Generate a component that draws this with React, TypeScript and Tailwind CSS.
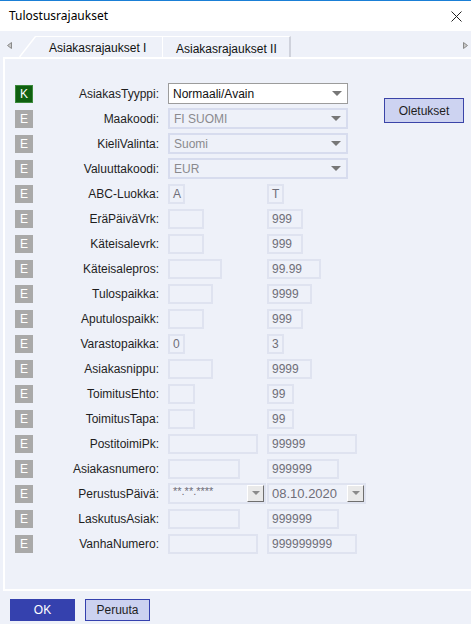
import { ReactNode } from 'react';

type Field = {
  label: string;
  tag?: 'K' | 'E';
  left?: ReactNode;
  right?: ReactNode;
};

function Select({ value, primary }: { value: string; primary?: boolean }) {
  return (
    <div
      className={
        primary
          ? 'w-[180px] h-[21px] shrink-0 flex items-center justify-between pl-[4px] pr-[5px] bg-white border border-[#9c9c9c] text-[#111]'
          : 'w-[180px] h-[21px] shrink-0 flex items-center justify-between pl-[4px] pr-[5px] border-2 border-[#d7dcee] text-[#8a8a8e]'
      }
    >
      <span className="leading-none">{value}</span>
      <svg width="10" height="6" viewBox="0 0 10 6">
        <path d="M0 0 L10 0 L5 5 Z" fill="#777" />
      </svg>
    </div>
  );
}

function Box({ w, value }: { w: string; value?: string }) {
  return (
    <div className={`${w} h-[20px] shrink-0 border-2 border-[#dfe3f0] flex items-center pl-[3px] text-[#6e6e78] leading-none`}>
      {value}
    </div>
  );
}

function DropButton() {
  return (
    <div className="w-[17px] h-[17px] bg-[#e9e9e9] border-t border-l border-t-white border-l-white border-b border-r border-b-[#6f6f6f] border-r-[#6f6f6f] flex items-center justify-center">
      <svg width="8" height="5" viewBox="0 0 8 5">
        <path d="M0 0 L8 0 L4 4 Z" fill="#8a8a8a" />
      </svg>
    </div>
  );
}

function DateBox({ w, value, small }: { w: string; value: string; small?: boolean }) {
  return (
    <div className={`${w} h-[21px] shrink-0 border-2 border-[#dfe3f0] flex items-center justify-between pl-[3px] text-[#6e6e78] leading-none`}>
      <span className={small ? 'text-[11px] -mt-[5px]' : 'text-[13px]'}>{value}</span>
      <DropButton />
    </div>
  );
}

const fields: Field[] = [
  { label: 'AsiakasTyyppi:', tag: 'K', left: <Select value="Normaali/Avain" primary /> },
  { label: 'Maakoodi:', left: <Select value="FI SUOMI" /> },
  { label: 'KieliValinta:', left: <Select value="Suomi" /> },
  { label: 'Valuuttakoodi:', left: <Select value="EUR" /> },
  { label: 'ABC-Luokka:', left: <Box w="w-[17px]" value="A" />, right: <Box w="w-[17px]" value="T" /> },
  { label: 'EräPäiväVrk:', left: <Box w="w-[36px]" />, right: <Box w="w-[36px]" value="999" /> },
  { label: 'Käteisalevrk:', left: <Box w="w-[36px]" />, right: <Box w="w-[36px]" value="999" /> },
  { label: 'Käteisalepros:', left: <Box w="w-[54px]" />, right: <Box w="w-[54px]" value="99.99" /> },
  { label: 'Tulospaikka:', left: <Box w="w-[45px]" />, right: <Box w="w-[45px]" value="9999" /> },
  { label: 'Aputulospaikk:', left: <Box w="w-[36px]" />, right: <Box w="w-[36px]" value="999" /> },
  { label: 'Varastopaikka:', left: <Box w="w-[17px]" value="0" />, right: <Box w="w-[17px]" value="3" /> },
  { label: 'Asiakasnippu:', left: <Box w="w-[45px]" />, right: <Box w="w-[45px]" value="9999" /> },
  { label: 'ToimitusEhto:', left: <Box w="w-[27px]" />, right: <Box w="w-[27px]" value="99" /> },
  { label: 'ToimitusTapa:', left: <Box w="w-[27px]" />, right: <Box w="w-[27px]" value="99" /> },
  { label: 'PostitoimiPk:', left: <Box w="w-[90px]" />, right: <Box w="w-[90px]" value="99999" /> },
  { label: 'Asiakasnumero:', left: <Box w="w-[72px]" />, right: <Box w="w-[72px]" value="999999" /> },
  {
    label: 'PerustusPäivä:',
    left: <DateBox w="w-[98px]" value="**.**.****" small />,
    right: <DateBox w="w-[99px]" value="08.10.2020" />,
  },
  { label: 'LaskutusAsiak:', left: <Box w="w-[72px]" />, right: <Box w="w-[72px]" value="999999" /> },
  { label: 'VanhaNumero:', left: <Box w="w-[90px]" />, right: <Box w="w-[90px]" value="999999999" /> },
];

function Row({ field }: { field: Field }) {
  const isKey = field.tag === 'K';
  return (
    <div className="h-[25px] flex items-center">
      <div
        className={
          isKey
            ? 'w-[18px] h-[18px] bg-[#106010] border border-[#3c8a3c] text-white flex items-center justify-center'
            : 'w-[18px] h-[18px] bg-[#a9a9a9] text-white flex items-center justify-center'
        }
      >
        {isKey ? 'K' : 'E'}
      </div>
      <div className="w-[127px] text-right text-[#1e1e1e] pr-[1px]">{field.label}</div>
      <div className="ml-[8px] w-[99px] shrink-0 flex">{field.left}</div>
      <div className="flex">{field.right}</div>
    </div>
  );
}

export default function App() {
  return (
    <div className="w-[471px] h-[624px] bg-[#eef1f9] flex flex-col overflow-hidden text-[12px] font-['Liberation_Sans',Arial,sans-serif]">
      <div className="h-px bg-[#1a7fd6]" />

      {/* Title bar */}
      <div className="h-[30px] bg-white flex items-center justify-between pl-[9px] pr-[9px]">
        <span className="text-[12px] text-black font-['Noto_Sans',sans-serif]">Tulostusrajaukset</span>
        <svg width="11" height="11" viewBox="0 0 11 11">
          <path d="M0.5 0.5 L10.5 10.5 M10.5 0.5 L0.5 10.5" stroke="#222" strokeWidth="1" />
        </svg>
      </div>

      {/* Tabs */}
      <div className="h-[26px] flex items-end relative">
        <svg className="absolute left-[7px] top-[11px]" width="5" height="7" viewBox="0 0 5 7">
          <path d="M4.5 0.5 L0.5 3.5 L4.5 6.5 Z" fill="#c8c8c8" stroke="#8a8a8a" strokeWidth="1" />
        </svg>
        <svg className="absolute right-[3px] top-[11px]" width="5" height="7" viewBox="0 0 5 7">
          <path d="M0.5 0.5 L4.5 3.5 L0.5 6.5 Z" fill="#c8c8c8" stroke="#8a8a8a" strokeWidth="1" />
        </svg>
        <div className="ml-[19px] w-[143px] h-[21px] relative">
          <svg className="absolute left-0 top-0" width="17" height="21" viewBox="0 0 17 21">
            <path d="M0.5 21 L16.5 0.5" stroke="#ffffff" strokeWidth="1.5" />
          </svg>
          <div className="absolute left-[16px] right-0 top-0 h-px bg-white" />
          <div className="pl-[30px] pt-[3px] text-[#111]">Asiakasrajaukset I</div>
        </div>
        <div className="w-[129px] h-[21px] border-l border-t border-white border-r-2 border-r-[#cfd2dc] pl-[13px] pt-[3px] text-[#111]">
          Asiakasrajaukset II
        </div>
      </div>

      {/* Panel */}
      <div className="ml-[3px] h-[534px] border-l-2 border-t-2 border-b-2 border-white flex">
        <div className="w-[379px] shrink-0 pl-[10px] pt-[22px] flex flex-col">
          {fields.map((f) => (
            <Row key={f.label} field={f} />
          ))}
        </div>
        <div className="pt-[39px]">
          <button className="w-[80px] h-[25px] bg-[#cdd3f1] border border-[#3a44a8] text-[#1e1e1e] text-[12px]">
            Oletukset
          </button>
        </div>
      </div>

      {/* Footer buttons */}
      <div className="flex gap-[10px] pl-[10px] pt-[8px]">
        <button className="w-[65px] h-[22px] bg-[#3541ae] text-white text-[12px]">OK</button>
        <button className="w-[65px] h-[22px] bg-[#ccd2f0] border border-[#3541ae] text-[#1e1e1e] text-[12px]">
          Peruuta
        </button>
      </div>
    </div>
  );
}
